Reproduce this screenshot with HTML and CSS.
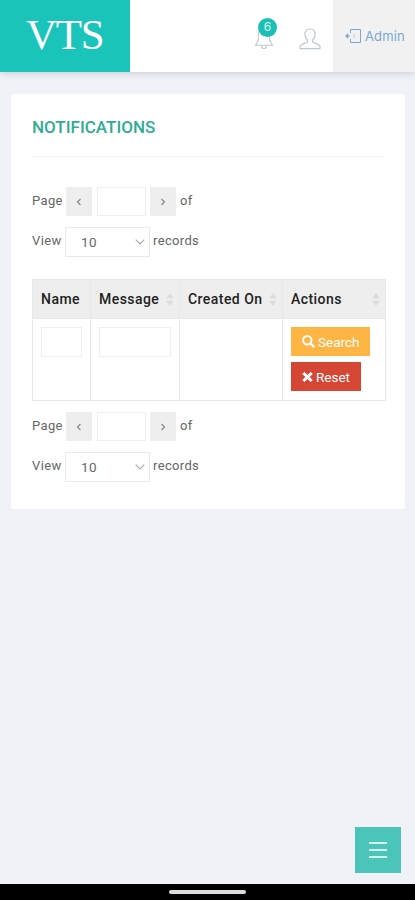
FILE: index.html
```html
<!DOCTYPE html>
<html lang="en">
<head>
<meta charset="utf-8">
<title>Notifications</title>
<link rel="stylesheet" href="styles.css">
</head>
<body>
<header class="topbar">
  <div class="logo"><span>VTS</span></div>
  <div class="tools">
    <div class="bell">
      <svg width="20" height="24" viewBox="0 0 20 24" fill="none" stroke="#bcc6d2" stroke-width="1.1"><path d="M10 2C6 2 4.300 5 4.300 9v5.500L1.500 19.300h17L15.700 14.500V9C15.700 5 14 2 10 2zM7.500 20c0 3.300 5 3.300 5 0"/></svg>
      <span class="badge">6</span>
    </div>
    <svg class="user" width="22" height="22" viewBox="0 0 22 22" fill="none" stroke="#bcc6d2" stroke-width="1.200"><path d="M11 1C7.500 1 5.700 3.300 5.900 6.500c.1 2.500 1 4.300 2.500 5.500v2c-1 1.300-6.900 2-7.400 4.300V20.700h20v-2.400c-.5-2.300-6.400-3-7.400-4.300v-2c1.500-1.200 2.400-3 2.500-5.500C16.300 3.300 14.500 1 11 1z"/></svg>
  </div>
  <div class="account">
    <svg width="17" height="16" viewBox="0 0 17 16" fill="none" stroke="#7ba7d4" stroke-width="1"><path d="M5.500 5V1.500H15.500V14.500H5.500V11"/><path d="M5 8H.7M2.800 5.800.7 8l2.100 2.200z" fill="#7ba7d4"/><path d="M10 6.200 8.700 8l1.300 1.800" opacity=".6"/></svg>
    <span>Admin</span>
  </div>
</header>
<main class="card">
  <h1>NOTIFICATIONS</h1>
  <div class="pager">
    <div class="row"><span class="w-label">Page</span><button><svg width="6" height="8" viewBox="0 0 6 8"><path d="M4.500 1 1.500 4l3 3"/></svg></button><span class="page-input"></span><button><svg width="6" height="8" viewBox="0 0 6 8"><path d="M1.500 1l3 3-3 3"/></svg></button><span class="of">of</span></div>
    <div class="row"><span class="w-label">View</span><span class="select">10<svg width="10" height="6" viewBox="0 0 10 6"><path d="M.7.7 5 5 9.300.7"/></svg></span><span class="records">records</span></div>
  </div>
  <table>
    <colgroup><col class="c1"><col class="c2"><col class="c3"><col class="c4"></colgroup>
    <thead><tr>
      <th>Name</th>
      <th><div class="head">Message<svg class="sort" width="8" height="13" viewBox="0 0 8 13"><path d="M4 0 7.800 5.300H.2zM4 13 .2 7.700h7.600z"/></svg></div></th>
      <th><div class="head">Created On<svg class="sort" width="8" height="13" viewBox="0 0 8 13"><path d="M4 0 7.800 5.300H.2zM4 13 .2 7.700h7.600z"/></svg></div></th>
      <th><div class="head">Actions<svg class="sort" width="8" height="13" viewBox="0 0 8 13"><path d="M4 0 7.800 5.300H.2zM4 13 .2 7.700h7.600z"/></svg></div></th>
    </tr></thead>
    <tbody><tr>
      <td><div class="filter"></div></td>
      <td><div class="filter"></div></td>
      <td></td>
      <td>
        <div class="btn search"><svg width="13" height="13" viewBox="0 0 13 13" fill="none" stroke="#fff" stroke-width="2"><circle cx="5.300" cy="5.300" r="4.200"/><path d="m8.400 8.400 3.800 3.800" stroke-width="2.400"/></svg>Search</div>
        <div class="btn reset"><svg width="11" height="10" viewBox="0 0 11 10" fill="none" stroke="#fff" stroke-width="3"><path d="m1.300 1 8.400 8M9.700 1 1.300 9"/></svg>Reset</div>
      </td>
    </tr></tbody>
  </table>
  <div class="pager">
    <div class="row"><span class="w-label">Page</span><button><svg width="6" height="8" viewBox="0 0 6 8"><path d="M4.500 1 1.500 4l3 3"/></svg></button><span class="page-input"></span><button><svg width="6" height="8" viewBox="0 0 6 8"><path d="M1.500 1l3 3-3 3"/></svg></button><span class="of">of</span></div>
    <div class="row"><span class="w-label">View</span><span class="select">10<svg width="10" height="6" viewBox="0 0 10 6"><path d="M.7.7 5 5 9.300.7"/></svg></span><span class="records">records</span></div>
  </div>
</main>
<div class="fab"><span></span><span></span><span></span></div>
<footer class="navbar"><span></span></footer>
</body>
</html>
```

FILE: styles.css
```css
* { box-sizing: border-box; }
body {
  margin: 0;
  height: 900px;
  display: flex;
  flex-direction: column;
  background: #f0f2f8;
  font-family: Roboto, sans-serif;
  font-size: 13px;
  color: #666;
  overflow: hidden;
}
svg { display: block; flex: none; }
.topbar {
  flex: none;
  display: flex;
  height: 72px;
  background: #fff;
  box-shadow: 0 1px 7px rgba(80, 85, 105, .25);
}
.logo {
  width: 130px;
  padding: 9px 0 0 26px;
  background: #1bc4bb;
  color: #fff;
  font: 43px/52px "Liberation Serif", serif;
  letter-spacing: -1.3px;
}
.tools { flex: 1; display: flex; }
.bell { position: relative; margin: 26px 0 0 124px; width: 20px; }
.badge {
  position: absolute;
  left: 4px;
  top: -8px;
  width: 19px;
  height: 19px;
  border-radius: 50%;
  background: #1bc0b5;
  color: #dffaf5;
  font: 12px/18px Inter, sans-serif;
  text-align: center;
}
.user { margin: 28px 0 0 25px; }
.account {
  width: 82px;
  display: flex;
  align-items: center;
  padding-left: 12px;
  gap: 3px;
  background: #f1f1f1;
  color: #7ba7d4;
  font-family: Inter, sans-serif;
  font-feature-settings: "cv11";
  font-size: 13px;
  letter-spacing: .15px;
}
.card {
  flex: none;
  margin: 22px 10px 0 11px;
  height: 415px;
  padding: 0 20px 0 21px;
  background: #fff;
  border-radius: 2px;
}
h1 {
  margin: 0 0 30px;
  height: 63px;
  padding-top: 2px;
  border-bottom: 1px solid #f3f3f3;
  font-size: 17px;
  line-height: 62px;
  font-weight: 500;
  color: #2fac94;
}
.row { display: flex; align-items: center; height: 29px; margin-bottom: 11px; letter-spacing: .35px; }
.w-label { width: 34px; padding-bottom: 2px; }
.row button {
  width: 26px;
  height: 29px;
  padding: 0;
  border: 0;
  background: #eee;
  display: flex;
  align-items: center;
  justify-content: center;
}
.row svg { fill: none; stroke: #888; stroke-width: 1.2; }
.page-input { width: 49px; height: 29px; margin: 0 4px 0 5px; border: 1px solid #eee; }
.of { margin-left: 4px; padding-bottom: 2px; }
.select {
  width: 85px;
  height: 30px;
  margin-left: -1px;
  padding: 0 4px 0 15px;
  border: 1px solid #eaeaea;
  display: flex;
  align-items: center;
  justify-content: space-between;
  font-size: 13.5px;
}
.row .select svg { stroke: #aaa; }
.records { margin-left: 3px; padding-bottom: 2px; }
table {
  width: 353px;
  margin: 23px 0 11px;
  table-layout: fixed;
  border-collapse: collapse;
}
.c1 { width: 58px; }
.c2 { width: 89px; }
.c3 { width: 103px; }
.c4 { width: 103px; }
th {
  height: 39px;
  padding: 0 5px 0 8px;
  border: 1px solid #e8e8e8;
  background: #eee;
  color: #222;
  font-size: 14px;
  font-weight: 500;
  letter-spacing: .45px;
  text-align: left;
  white-space: nowrap;
}
.head { display: flex; align-items: center; justify-content: space-between; }
.sort { fill: #dcdcdc; }
td { height: 82px; padding: 8px; border: 1px solid #e7e7e7; vertical-align: top; }
.filter { height: 30px; border: 1px solid #eee; }
.btn {
  display: flex;
  align-items: center;
  height: 29px;
  padding-left: 11px;
  color: #fff;
  font-size: 13.5px;
}
.search { width: 79px; gap: 3px; background: #ffb544; }
.reset { width: 70px; gap: 3px; margin-top: 6px; background: #d64635; }
.fab {
  flex: none;
  width: 46px;
  height: 46px;
  margin: auto 14px 11px auto;
  padding: 15px 14px;
  display: flex;
  flex-direction: column;
  gap: 5px;
  background: #4bc4ba;
}
.fab span { height: 2px; background: #d3f3ed; }
.navbar { flex: none; height: 16px; background: #000; display: flex; justify-content: center; padding-top: 6px; }
.navbar span { width: 77px; height: 4px; border-radius: 2px; background: #ddd; }
```
